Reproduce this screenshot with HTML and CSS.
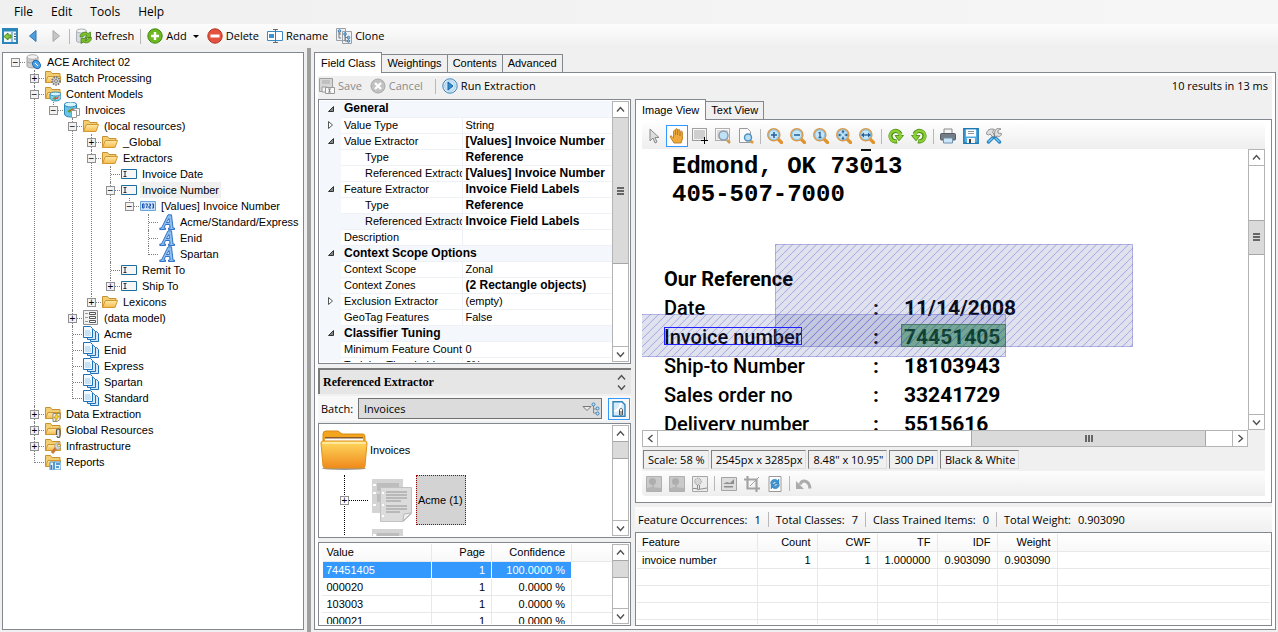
FILE: index.html
```html
<!DOCTYPE html>
<html lang="en">
<head>
<meta charset="utf-8">
<title>ACE Architect 02</title>
<link rel="stylesheet" href="styles.css">
</head>
<body>
<svg class="defs" aria-hidden="true">
  <defs>
    <linearGradient id="gold" x1="0" y1="0" x2="0" y2="1"><stop offset="0" stop-color="#ffd95e"/><stop offset="1" stop-color="#f08a1c"/></linearGradient>
    <linearGradient id="tan" x1="0" y1="0" x2="0" y2="1"><stop offset="0" stop-color="#ffe9a8"/><stop offset="1" stop-color="#f6bb4c"/></linearGradient>
  </defs>
  <symbol id="i-panel" viewBox="0 0 16 16"><rect x="1" y="1" width="14" height="14" fill="#eef6fc" stroke="#2a86b8" stroke-width="2"/><path d="M1 2.500h14" stroke="#2a86b8" stroke-width="2"/><path d="M10 4v11" stroke="#2a86b8"/><path d="M2 8.500 6 5v2h3v3H6v2z" fill="#8cc63a" stroke="#4c8a14"/><path d="M12 6h2M12 8.500h2M12 11h2" stroke="#445"/></symbol>
  <symbol id="i-back" viewBox="0 0 16 16"><path d="M11 2.500v11L4.500 8z" fill="#4d9fdc" stroke="#2c76b4"/></symbol>
  <symbol id="i-fwd" viewBox="0 0 16 16"><path d="M5 2.500v11L11.500 8z" fill="#c6c6c6" stroke="#a8a8a8"/></symbol>
  <symbol id="i-refresh" viewBox="0 0 16 16"><path d="M.5 3v10c0 2 10 2 10 0V3z" fill="#d7dbe0" stroke="#aab0b8"/><ellipse cx="5.500" cy="3" rx="5" ry="2" fill="#f3f5f7" stroke="#aab0b8"/><path d="M4 9c0-5 6-6 8-3.500l2.500-1.500v5.500H9l2-2c-2-1-4 0-4 1.500zM15.500 9.500c0 5-5 6.500-8 4.500l-2.500 1.500v-5h6l-2 2c2 0 3-1 3.500-3z" fill="#7cbf2a" stroke="#3f7d12" stroke-width=".7"/></symbol>
  <symbol id="i-add" viewBox="0 0 16 16"><circle cx="8" cy="8" r="7.200" fill="#6cb81e" stroke="#3f8a10"/><path d="M8 4v8M4 8h8" stroke="#fff" stroke-width="2.400"/></symbol>
  <symbol id="i-del" viewBox="0 0 16 16"><circle cx="8" cy="8" r="7.200" fill="#e4533f" stroke="#b8301f"/><path d="M3.500 8h9" stroke="#fff" stroke-width="3"/></symbol>
  <symbol id="i-rename" viewBox="0 0 16 16"><path d="M.5 3.500h15v9H.5z" fill="#fff" stroke="#3d8bc4"/><path d="M2 6h5v4H2z" fill="#3f92d2"/><path d="M6 1.500h5M8.500 1v14M6 14.500h5" stroke="#6b6b6b"/></symbol>
  <symbol id="i-clone" viewBox="0 0 16 16"><path d="M.5 .5h9v12h-9zM6.500 3.500h9v12h-9z" fill="#eef0f3" stroke="#9aa0a8"/><path d="M3 3v7h2M9 6v7h3M9 9.500h3M3 6h2" stroke="#777" fill="none"/><g fill="#8ec1ea" stroke="#2d6fa8" stroke-width=".8"><circle cx="3.500" cy="3" r="1.300"/><circle cx="9" cy="6" r="1.300"/><circle cx="12.500" cy="9.500" r="1.300"/><circle cx="12.500" cy="13" r="1.300"/></g></symbol>
  <symbol id="i-root" viewBox="0 0 16 16"><path d="M1 3v9c0 2.500 11 2.500 11 0V3z" fill="#cfcfcf" stroke="#a0a0a0"/><ellipse cx="6.500" cy="3" rx="5.500" ry="2.300" fill="#f2f2f2" stroke="#a8a8a8"/><path d="M1 7.500c2 2 9 2 11 0" stroke="#a0a0a0" fill="none"/><ellipse cx="10.500" cy="10.500" rx="3.500" ry="4.500" transform="rotate(-40 10.500 10.500)" fill="#4da2e6" stroke="#1c64a8"/><path d="m9 9 3 3M14 7l1-1M14 14l2 2" stroke="#fff"/></symbol>
  <symbol id="i-folder" viewBox="0 0 16 16"><path d="M.5 13.500v-11h5l1.500 2h7v2.500" fill="#f2cd72" stroke="#c69231"/><path d="M.5 13.500 3.500 6.500h12l-2.500 7z" fill="url(#tan)" stroke="#cf9833"/></symbol>
  <symbol id="i-fback" viewBox="0 0 16 16"><path d="M.5 12.500V1.500h5l1.500 2h8v9z" fill="#f2cd72" stroke="#c69231"/><path d="M.5 12.500 3 6.500h12.500v6z" fill="url(#tan)" stroke="#cf9833"/></symbol>
  <symbol id="i-fgear" viewBox="0 0 16 16"><use href="#i-fback"/><circle cx="11" cy="11" r="3.800" fill="#d5d5d5" stroke="#7a7a7a" stroke-dasharray="1.500 1" stroke-width="2"/><circle cx="11" cy="11" r="1.400" fill="#fff" stroke="#777"/></symbol>
  <symbol id="i-fdb" viewBox="0 0 16 16"><use href="#i-fback"/><path d="M5 8v4c1 4 10 4 11 0V8z" fill="#8ad2ee" stroke="#2f8fbc"/><ellipse cx="10.500" cy="8" rx="5.500" ry="2" fill="#d8f4fd" stroke="#2f8fbc"/><path d="m7 13 4-3v4z" fill="#5aa22e"/><path d="m9 13 5-3-1 3z" fill="#e6523b"/></symbol>
  <symbol id="i-fbolt" viewBox="0 0 16 16"><use href="#i-fback"/><path d="M8 7.500h7v6l-3 2H8z" fill="#eee" stroke="#8a8a8a"/><path d="m12 7-3 5h2l-1 4 4-6h-2z" fill="#ffd72e" stroke="#b58900" stroke-width=".6"/></symbol>
  <symbol id="i-fclip" viewBox="0 0 16 16"><use href="#i-fback"/><path d="M11.500 13V8.500c0-2 3.500-2 3.500 0V14c0 2-3 2-3 0" fill="#ddd" stroke="#555" stroke-width="1.200"/></symbol>
  <symbol id="i-ftool" viewBox="0 0 16 16"><use href="#i-fback"/><path d="m7 15 4-5" stroke="#c77a3a" stroke-width="3"/><path d="M10 9c-1-3 2-5 4-4l-2 2 1 2 3-1c0 3-3 4-5 3z" fill="#d4d9de" stroke="#888" stroke-width=".6"/></symbol>
  <symbol id="i-frep" viewBox="0 0 16 16"><use href="#i-fback"/><path d="M5 8h11v8H5z" fill="#e6f2fc" stroke="#4a90c8"/><path d="M6.500 11v4.500M9 8v7.500" stroke="#2b7dc4" stroke-width="1.500"/><path d="M11 10h4M11 13h3" stroke="#2b7dc4" stroke-width="1.300"/></symbol>
  <symbol id="i-db" viewBox="0 0 16 16"><path d="M.5 2v10c0 4 12 4 12 0V2z" fill="#6cc3e8" stroke="#2a87b5"/><ellipse cx="6.500" cy="2.500" rx="6" ry="2.500" fill="#d8f4fd" stroke="#2a87b5"/><path d="m3 9 6-3-3 5z" fill="#5aa22e"/><path d="m5 9 5-3-1 3z" fill="#e6523b"/><path d="M7.500 8.500h5v7h-5zM10.500 6.500h5v7h-3" fill="#fff" stroke="#999"/></symbol>
  <symbol id="i-field" viewBox="0 0 16 16"><path d="M.5 3.500h15v9H.5z" fill="#f6f6f6" stroke="#1e6f9e"/><path d="M2.500 5.500h3M4 5.500v5M2.500 10.500h3" stroke="#333"/></symbol>
  <symbol id="i-value" viewBox="0 0 16 16"><path d="M.5 3.500h15v9H.5z" fill="#c9e2f7" stroke="#6aa5dc"/><path d="M2.500 6h1.500v4h-1.500zM5.500 6h2L6.500 10M9 6h1.500v2H9v2h2M12 6h1.500v4h-1.500M12.500 8h1" fill="none" stroke="#1b4fb0"/></symbol>
  <symbol id="i-a" viewBox="0 0 16 16"><path d="M9 .8h3.500L14 14h1.500v1.500H9.500V14H11l-.4-3.500H6.500L5 14h1.500v1.500H.8V14H2.500zM7.400 8.500h3l-.4-4z" fill="#8cc0f4" fill-rule="evenodd" stroke="#2567bd" stroke-width=".9"/></symbol>
  <symbol id="i-model" viewBox="0 0 16 16"><path d="M.5 .5h14v14H.5z" fill="#f3f3f3" stroke="#8e8e8e"/><path d="M2 3.500h3M2 7.500h3M2 11.500h3" stroke="#999"/><path d="M6.500 2.500h6v2h-6zM6.500 6.500h6v2h-6zM6.500 10.500h6v2h-6z" fill="#fff" stroke="#555"/></symbol>
  <symbol id="i-docs" viewBox="0 0 16 16"><g fill="#d6eafb" stroke="#1e70b8"><path d="M7.500 5.500h6l2 2v8h-8z"/><path d="M4.500 3.500h6l2 2v8h-8z"/><path d="M.5 .5h7l2 2v9h-9z" fill="#f2f9ff"/></g><path d="M2 5h5M2 7h6M2 9h6" stroke="#9cc8ee"/></symbol>
  <symbol id="i-save" viewBox="0 0 16 16"><path d="M.5 .5h13v13H.5z" fill="#d6d6d6" stroke="#9f9f9f"/><path d="M3 3h8M3 5h8" stroke="#aaa"/><path d="M3 9h5v5H3z" fill="#f3f3f3" stroke="#999"/><path d="M6.500 9.500h9v6h-9z" fill="#f7f7f7" stroke="#999"/><path d="M9 11h3M10.500 11v3M9 14h3" stroke="#888"/></symbol>
  <symbol id="i-cancel" viewBox="0 0 16 16"><circle cx="8" cy="8" r="7" fill="#c2c2c2" stroke="#a8a8a8"/><path d="m5 5 6 6M11 5l-6 6" stroke="#fff" stroke-width="2.400"/></symbol>
  <symbol id="i-run" viewBox="0 0 16 16"><circle cx="8" cy="8" r="7.200" fill="#e3f1fb" stroke="#3b83b8"/><circle cx="8" cy="8" r="5.300" fill="#c9e5f8" stroke="#a7cfea"/><path d="M6 4v8l5-4z" fill="#2f8fd0" stroke="#1b629a"/></symbol>
  <symbol id="i-pointer" viewBox="0 0 16 16"><path d="M4 1v12l3-3 2 5 2-1-2-4.500h4z" fill="#ddd" stroke="#8a8a8a"/></symbol>
  <symbol id="i-hand" viewBox="0 0 16 16"><path d="M5 15 1.500 9.500c-1-2 1-2 1.500-1L4.500 10V3.500c0-1.500 2-1.500 2 0V7 1.800c0-1.500 2-1.500 2 0V7l.5-4.500c0-1.300 1.900-1.300 1.900 0V8l.6-4c.2-1.200 1.900-1 1.900.3V11L12 15z" fill="#eda93c" stroke="#bd7a1c" stroke-width=".9"/></symbol>
  <symbol id="i-sel" viewBox="0 0 16 16"><path d="M2 2h11v9H2z" fill="#cfcfcf"/><path d="M.5 .5h14v12H.5z" fill="none" stroke="#444" stroke-dasharray="1 1"/><path d="M12.500 9v7M9 12.500h7" stroke="#000"/></symbol>
  <symbol id="i-zsel" viewBox="0 0 16 16"><path d="M2 2h11v9H2z" fill="#dcdcdc"/><path d="M.5 .5h14v12H.5z" fill="none" stroke="#666" stroke-dasharray="1 1"/><path d="m12 12 3 3" stroke="#cf9a55" stroke-width="2.500"/><circle cx="8.500" cy="7.500" r="4.500" fill="#bfe2f7" stroke="#8d9cab" stroke-width="1.500"/></symbol>
  <symbol id="i-zpage" viewBox="0 0 16 16"><path d="M1.500 .5h8l3 3v11h-11z" fill="#fafafa" stroke="#999"/><path d="m12.500 12.500 2.500 2.500" stroke="#e29a35" stroke-width="2.500"/><circle cx="10" cy="9.500" r="3.500" fill="#b5def7" stroke="#4e8fc0" stroke-width="1.400"/></symbol>
  <symbol id="i-lens" viewBox="0 0 16 16"><path d="m11.500 11.500 3 3" stroke="#e0922c" stroke-width="3.200" stroke-linecap="round"/><circle cx="6.800" cy="6.800" r="6" fill="#c4e6fa" stroke="#d99a4a" stroke-width="1.600"/><circle cx="6.800" cy="6.800" r="4.900" fill="none" stroke="#7fb6d8" stroke-width=".8"/></symbol>
  <symbol id="i-zin" viewBox="0 0 16 16"><use href="#i-lens"/><path d="M7 4v6M4 7h6" stroke="#245f96" stroke-width="1.500"/></symbol>
  <symbol id="i-zout" viewBox="0 0 16 16"><use href="#i-lens"/><path d="M4 7h6" stroke="#245f96" stroke-width="1.500"/></symbol>
  <symbol id="i-zone" viewBox="0 0 16 16"><use href="#i-lens"/><path d="M5.500 5 7 4.500V9.500M5.500 9.500h3" stroke="#245f96" stroke-width="1.300" fill="none"/></symbol>
  <symbol id="i-zfit" viewBox="0 0 16 16"><use href="#i-lens"/><path d="m7 2 1.800 2.300H5.200zM7 12l1.800-2.300H5.200zM2 7l2.300-1.800v3.600zM12 7 9.700 5.200v3.600z" fill="#245f96"/><path d="M7 4v1.500M7 8.500V10M4 7h1.500M8.500 7H10" stroke="#245f96"/></symbol>
  <symbol id="i-zwide" viewBox="0 0 16 16"><use href="#i-lens"/><path d="M2 7 5 4.500v5zM12 7 9 4.500v5z" fill="#245f96"/><path d="M4 7h6" stroke="#245f96" stroke-width="1.300"/></symbol>
  <symbol id="i-rotl" viewBox="0 0 16 16"><path d="M9 13.200A5.200 5.200 0 1 1 12.500 6" fill="none" stroke="#4a8c12" stroke-width="4.200"/><path d="M7 7.500h8.500L11 12.800z" fill="#8ccf35" stroke="#4a8c12" stroke-width=".9"/><path d="M8.500 13.100A5.200 5.200 0 1 1 12.200 6.500l.5 1.500" fill="none" stroke="#8ccf35" stroke-width="2.600"/></symbol>
  <symbol id="i-print" viewBox="0 0 16 16"><path d="M4 1h8v6H4z" fill="#f4f4f4" stroke="#888"/><rect x=".5" y="5.500" width="15" height="6.500" rx="1" fill="#747c86" stroke="#545b64"/><path d="M3.500 10h9v5h-9z" fill="#cfe6f8" stroke="#6b8fae"/></symbol>
  <symbol id="i-disk" viewBox="0 0 16 16"><path d="M.8 .8h14.400v14.400H.8z" fill="#53acdf" stroke="#1d78b4" stroke-width="1.400"/><path d="M3 1.500h10v7H3z" fill="#fff"/><path d="M5 3.500h6M5 5.500h6" stroke="#8a98a4"/><path d="M4 10h8v5H4z" fill="#f3f3f3"/><path d="M6 11h2v4H6z" fill="#444"/></symbol>
  <symbol id="i-tools" viewBox="0 0 16 16"><path d="m2.500 14 6-6M13.500 14 8 8.500" stroke="#2786c4" stroke-width="3.400" stroke-linecap="round"/><path d="m2.500 14 4-4M13.500 14l-4-4" stroke="#7cc3ee" stroke-width="1.400"/><path d="M.5 6c0-4 4-6 8-4.500L6.500 4l2.500 3.500L7 9 4 6 2.500 7zM8 7l1-4c1-3 4-3 6-2l-3 1.500V5l3.500 .5c0 3-3 3.500-4.500 2.500L9.500 9z" fill="#dedede" stroke="#7a7a7a" stroke-width=".8"/></symbol>
  <symbol id="i-land" viewBox="0 0 16 16"><path d="M.5 .5h15v15H.5z" fill="#c9c9c9" stroke="#b0b0b0"/><circle cx="6.500" cy="5.500" r="3.500" fill="#aeaeae"/><path d="M6 8h2v4H6zM1 12l4-1 10 1v3H1z" fill="#b4b4b4"/></symbol>
  <symbol id="i-land2" viewBox="0 0 16 16"><path d="M.5 .5h15v15H.5z" fill="#ececec" stroke="#a6a6a6"/><circle cx="6" cy="5.500" r="3.300" fill="#d6d6d6" stroke="#8c8c8c" stroke-dasharray="1 1"/><path d="M5.500 9v4M7.500 9v4M1 12.500h3l2 1 9-1.500" stroke="#8f8f8f" fill="none"/></symbol>
  <symbol id="i-pic" viewBox="0 0 16 16"><path d="M.5 1.500h15v13H.5z" fill="#ddd" stroke="#a4a4a4"/><path d="M2 8l4-2 3 1 4-4v5H2zM3 10h9v1.500H3z" fill="#8e8e8e"/></symbol>
  <symbol id="i-crop" viewBox="0 0 16 16"><path d="M3.500 0v12.500H16M0 3.500h12.500V16" fill="none" stroke="#a3a3a3" stroke-width="2.200"/><path d="m6 10 9-9" stroke="#a3a3a3"/></symbol>
  <symbol id="i-sync" viewBox="0 0 16 16"><path d="M2 .5h12v15H2z" fill="#fff" stroke="#999"/><path d="M3.500 7.500c0-4 5-5.500 7-3L12 3v5H7.500l1.500-1.500c-1-1-3 0-3 1zM12.500 8.500c0 4-5 5.500-7 3L4 13V8h4.500L7 9.500c1 1 3 0 3-1z" fill="#3e94d4" stroke="#1f6ba5" stroke-width=".4"/></symbol>
  <symbol id="i-undo" viewBox="0 0 16 16"><path d="M4 8.500c2-5 9-5 10 4" fill="none" stroke="#ababab" stroke-width="3"/><path d="M0 5v8h8z" fill="#ababab"/></symbol>
  <symbol id="i-pageclip" viewBox="0 0 16 16"><path d="M2 .8h9l3 3v11.400H2z" fill="#d6ecfa" stroke="#2e83bd" stroke-width="1.400"/><path d="M3 10c4 0 6-3 7-8" stroke="#fff" stroke-width="2" fill="none"/><path d="M8.500 14V9c0-2 3-2 3 0v5" fill="#fff" stroke="#555"/><path d="M10 10v5" stroke="#555"/></symbol>
  <symbol id="i-picker" viewBox="0 0 18 14"><path d="M1 4.500h8l-4 4z" fill="#eee" stroke="#777"/><path d="M11.500 3v8h3M11.500 7h3" stroke="#888" fill="none"/><g fill="#cfe6f8" stroke="#3b7db4"><circle cx="11.500" cy="2.500" r="1.500"/><circle cx="15.500" cy="6.500" r="1.500"/><circle cx="15.500" cy="11.500" r="1.500"/></g></symbol>
  <symbol id="i-up" viewBox="0 0 9 9"><path d="m1 6.500 3.500-4 3.500 4" fill="none" stroke="#505050" stroke-width="1.400"/></symbol>
  <symbol id="i-down" viewBox="0 0 9 9"><path d="m1 2.500 3.500 4 3.500-4" fill="none" stroke="#505050" stroke-width="1.400"/></symbol>
  <symbol id="i-left" viewBox="0 0 9 9"><path d="m6.500 1-4 3.500 4 3.500" fill="none" stroke="#505050" stroke-width="1.400"/></symbol>
  <symbol id="i-right" viewBox="0 0 9 9"><path d="m2.500 1 4 3.500-4 3.500" fill="none" stroke="#505050" stroke-width="1.400"/></symbol>
  <symbol id="i-open" viewBox="0 0 8 8"><path d="M5.500 1.500v5h-5z" fill="#888" stroke="#333"/></symbol>
  <symbol id="i-shut" viewBox="0 0 8 8"><path d="M.5 .5v7l4-3.500z" fill="#fff" stroke="#555"/></symbol>
  <symbol id="i-bigfolder" viewBox="0 0 48 42"><ellipse cx="24" cy="39.500" rx="22" ry="1.500" fill="#999"/><path d="M3 12V5q0-3 3-3h12l4 3h21q2 0 2 3v6z" fill="#f3a51d" stroke="#d98a14"/><path d="M5 8h38v8H5z" fill="#8a5a2a"/><path d="M5 9.500h38V16H5z" fill="#fff"/><path d="M1 14q0-2 2-2h42q2 0 2 2l-2 23q0 2-2 2H5q-2 0-2-2z" fill="url(#gold)" stroke="#e0901b"/><path d="M2.500 14h43" stroke="#fff1b0" stroke-width="1.500"/></symbol>
  <symbol id="i-bigdoc" viewBox="0 0 42 44"><path d="M1 1h31v34H1z" fill="#d4d4d4"/><path d="M6 5h22v8H6zM6 16h22v8H6z" fill="#bdbdbd"/><path d="M9.500 9.500h31v26l-8 8h-23z" fill="#dcdcdc" stroke="#c2c2c2"/><path d="M15 14h21M15 17h21M15 20h21M15 23h15M15 28h21M15 31h21M15 34h14" stroke="#b8b8b8" stroke-width="2"/><path d="m32 43 1-7 7-1z" fill="#f2f2f2" stroke="#b8b8b8"/><path d="M2 7h3M2 15h3M2 27h3M11 15h2M11 27h2M11 38h2" stroke="#fff" stroke-width="2"/></symbol>
</svg>

<div class="app">
  <nav class="menubar" aria-label="Main menu">
    <button>File</button><button>Edit</button><button>Tools</button><button>Help</button>
  </nav>
  <div class="toolbar main-tools">
    <button class="bare" aria-label="Toggle panel"><svg><use href="#i-panel"/></svg></button>
    <button class="bare" aria-label="Back"><svg><use href="#i-back"/></svg></button>
    <button class="bare" aria-label="Forward"><svg><use href="#i-fwd"/></svg></button>
    <i class="sep"></i>
    <button><svg><use href="#i-refresh"/></svg>Refresh</button>
    <i class="sep"></i>
    <button><svg><use href="#i-add"/></svg>Add<b class="caret"></b></button>
    <button><svg><use href="#i-del"/></svg>Delete</button>
    <button><svg><use href="#i-rename"/></svg>Rename</button>
    <button><svg><use href="#i-clone"/></svg>Clone</button>
  </div>

  <div class="workspace">
    <aside class="tree box">
      <ul class="root">
        <li><div class="row"><span class="tick"><button class="pm">−</button></span><svg><use href="#i-root"/></svg><span>ACE Architect 02</span></div>
          <ul>
            <li><div class="row"><span class="tick"><button class="pm">+</button></span><svg><use href="#i-fgear"/></svg><span>Batch Processing</span></div></li>
            <li><div class="row"><span class="tick"><button class="pm">−</button></span><svg><use href="#i-fdb"/></svg><span>Content Models</span></div>
              <ul>
                <li><div class="row"><span class="tick"><button class="pm">−</button></span><svg><use href="#i-db"/></svg><span>Invoices</span></div>
                  <ul>
                    <li><div class="row"><span class="tick"><button class="pm">−</button></span><svg><use href="#i-folder"/></svg><span>(local resources)</span></div>
                      <ul>
                        <li><div class="row"><span class="tick"><button class="pm">+</button></span><svg><use href="#i-folder"/></svg><span>_Global</span></div></li>
                        <li><div class="row"><span class="tick"><button class="pm">−</button></span><svg><use href="#i-folder"/></svg><span>Extractors</span></div>
                          <ul>
                            <li><div class="row"><span class="tick"></span><svg><use href="#i-field"/></svg><span>Invoice Date</span></div></li>
                            <li><div class="row"><span class="tick"><button class="pm">−</button></span><svg><use href="#i-field"/></svg><span class="picked">Invoice Number</span></div>
                              <ul>
                                <li><div class="row"><span class="tick"><button class="pm">−</button></span><svg><use href="#i-value"/></svg><span>[Values] Invoice Number</span></div>
                                  <ul>
                                    <li><div class="row"><span class="tick"></span><svg><use href="#i-a"/></svg><span>Acme/Standard/Express</span></div></li>
                                    <li><div class="row"><span class="tick"></span><svg><use href="#i-a"/></svg><span>Enid</span></div></li>
                                    <li><div class="row"><span class="tick"></span><svg><use href="#i-a"/></svg><span>Spartan</span></div></li>
                                  </ul>
                                </li>
                              </ul>
                            </li>
                            <li><div class="row"><span class="tick"></span><svg><use href="#i-field"/></svg><span>Remit To</span></div></li>
                            <li><div class="row"><span class="tick"><button class="pm">+</button></span><svg><use href="#i-field"/></svg><span>Ship To</span></div></li>
                          </ul>
                        </li>
                        <li><div class="row"><span class="tick"><button class="pm">+</button></span><svg><use href="#i-folder"/></svg><span>Lexicons</span></div></li>
                      </ul>
                    </li>
                    <li><div class="row"><span class="tick"><button class="pm">+</button></span><svg><use href="#i-model"/></svg><span>(data model)</span></div></li>
                    <li><div class="row"><span class="tick"></span><svg><use href="#i-docs"/></svg><span>Acme</span></div></li>
                    <li><div class="row"><span class="tick"></span><svg><use href="#i-docs"/></svg><span>Enid</span></div></li>
                    <li><div class="row"><span class="tick"></span><svg><use href="#i-docs"/></svg><span>Express</span></div></li>
                    <li><div class="row"><span class="tick"></span><svg><use href="#i-docs"/></svg><span>Spartan</span></div></li>
                    <li><div class="row"><span class="tick"></span><svg><use href="#i-docs"/></svg><span>Standard</span></div></li>
                  </ul>
                </li>
              </ul>
            </li>
            <li><div class="row"><span class="tick"><button class="pm">+</button></span><svg><use href="#i-fbolt"/></svg><span>Data Extraction</span></div></li>
            <li><div class="row"><span class="tick"><button class="pm">+</button></span><svg><use href="#i-fclip"/></svg><span>Global Resources</span></div></li>
            <li><div class="row"><span class="tick"><button class="pm">+</button></span><svg><use href="#i-ftool"/></svg><span>Infrastructure</span></div></li>
            <li><div class="row"><span class="tick"></span><svg><use href="#i-frep"/></svg><span>Reports</span></div></li>
          </ul>
        </li>
      </ul>
    </aside>
    <div class="splitter"></div>

    <main class="editor">
      <div class="tabs">
        <button class="tab on">Field Class</button><button class="tab">Weightings</button><button class="tab">Contents</button><button class="tab">Advanced</button>
      </div>
      <div class="page">
        <div class="toolbar run-tools">
          <button disabled><svg><use href="#i-save"/></svg>Save</button>
          <button disabled><svg><use href="#i-cancel"/></svg>Cancel</button>
          <i class="sep"></i>
          <button><svg><use href="#i-run"/></svg>Run Extraction</button>
          <span class="result">10 results in 13 ms</span>
        </div>
        <div class="columns">
          <section class="fields">
            <div class="box props">
              <div class="clip">
                <table>
                  <colgroup><col class="c-gut"><col class="c-name"><col></colgroup>
                  <tr class="cat"><td><svg><use href="#i-open"/></svg></td><th colspan="2">General</th></tr>
                  <tr><td><svg><use href="#i-shut"/></svg></td><th>Value Type</th><td>String</td></tr>
                  <tr><td><svg><use href="#i-open"/></svg></td><th>Value Extractor</th><td class="set">[Values] Invoice Number</td></tr>
                  <tr><td></td><th class="sub">Type</th><td class="set">Reference</td></tr>
                  <tr><td></td><th class="sub">Referenced Extractor</th><td class="set">[Values] Invoice Number</td></tr>
                  <tr><td><svg><use href="#i-open"/></svg></td><th>Feature Extractor</th><td class="set">Invoice Field Labels</td></tr>
                  <tr><td></td><th class="sub">Type</th><td class="set">Reference</td></tr>
                  <tr><td></td><th class="sub hot">Referenced Extractor</th><td class="set">Invoice Field Labels</td></tr>
                  <tr><td></td><th>Description</th><td></td></tr>
                  <tr class="cat"><td><svg><use href="#i-open"/></svg></td><th colspan="2">Context Scope Options</th></tr>
                  <tr><td></td><th>Context Scope</th><td>Zonal</td></tr>
                  <tr><td></td><th>Context Zones</th><td class="set">(2 Rectangle objects)</td></tr>
                  <tr><td><svg><use href="#i-shut"/></svg></td><th>Exclusion Extractor</th><td>(empty)</td></tr>
                  <tr><td></td><th>GeoTag Features</th><td>False</td></tr>
                  <tr class="cat"><td><svg><use href="#i-open"/></svg></td><th colspan="2">Classifier Tuning</th></tr>
                  <tr><td></td><th>Minimum Feature Count</th><td>0</td></tr>
                  <tr><td></td><th>Training Threshold</th><td>0%</td></tr>
                </table>
              </div>
              <div class="vbar"><button aria-label="Up"><svg><use href="#i-up"/></svg></button><div class="thumb t-props"><i class="grip"></i></div><div class="track"></div><button aria-label="Down"><svg><use href="#i-down"/></svg></button></div>
            </div>
            <div class="heading"><h2>Referenced Extractor</h2><span class="spin"><svg><use href="#i-up"/></svg><svg><use href="#i-down"/></svg></span></div>
            <div class="batch"><label for="batch">Batch:</label><div class="picker"><input id="batch" value="Invoices" readonly><svg><use href="#i-picker"/></svg></div><button class="clipbtn" aria-label="Show page"><svg><use href="#i-pageclip"/></svg></button></div>
            <div class="box items">
              <div class="clip">
                <div class="item"><svg class="big"><use href="#i-bigfolder"/></svg><span>Invoices</span></div>
                <div class="kids">
                  <div class="item"><span class="node"><button class="pm">+</button></span><svg class="doc"><use href="#i-bigdoc"/></svg><span class="chosen">Acme (1)</span></div>
                  <div class="item"><span class="node"></span><svg class="doc"><use href="#i-bigdoc"/></svg></div>
                </div>
              </div>
              <div class="vbar"><button aria-label="Up"><svg><use href="#i-up"/></svg></button><div class="thumb t-short"></div><div class="track"></div><button aria-label="Down"><svg><use href="#i-down"/></svg></button></div>
            </div>
            <div class="box values">
              <div class="clip">
                <table class="data">
                  <colgroup><col class="w110"><col class="w60"><col class="w80"><col></colgroup>
                  <thead><tr><th class="l">Value</th><th>Page</th><th>Confidence</th><th></th></tr></thead>
                  <tbody>
                    <tr class="sel"><td class="l">74451405</td><td>1</td><td>100.0000 %</td><td></td></tr>
                    <tr><td class="l">000020</td><td>1</td><td>0.0000 %</td><td></td></tr>
                    <tr><td class="l">103003</td><td>1</td><td>0.0000 %</td><td></td></tr>
                    <tr><td class="l">000021</td><td>1</td><td>0.0000 %</td><td></td></tr>
                  </tbody>
                </table>
              </div>
              <div class="vbar"><button aria-label="Up"><svg><use href="#i-up"/></svg></button><div class="thumb t-short"></div><div class="track"></div><button aria-label="Down"><svg><use href="#i-down"/></svg></button></div>
            </div>
          </section>

          <section class="viewer">
            <div class="tabs"><button class="tab on">Image View</button><button class="tab">Text View</button></div>
            <div class="imgpage">
              <div class="toolbar icons">
                <button aria-label="Pointer"><svg><use href="#i-pointer"/></svg></button>
                <button class="active" aria-label="Pan"><svg><use href="#i-hand"/></svg></button>
                <button aria-label="Select"><svg><use href="#i-sel"/></svg></button>
                <button aria-label="Zoom selection"><svg><use href="#i-zsel"/></svg></button>
                <button aria-label="Zoom page"><svg><use href="#i-zpage"/></svg></button>
                <i class="sep"></i>
                <button aria-label="Zoom in"><svg><use href="#i-zin"/></svg></button>
                <button aria-label="Zoom out"><svg><use href="#i-zout"/></svg></button>
                <button aria-label="Actual size"><svg><use href="#i-zone"/></svg></button>
                <button aria-label="Fit page"><svg><use href="#i-zfit"/></svg></button>
                <button aria-label="Fit width"><svg><use href="#i-zwide"/></svg></button>
                <i class="sep"></i>
                <button aria-label="Rotate left"><svg><use href="#i-rotl"/></svg></button>
                <button aria-label="Rotate right"><svg class="flip"><use href="#i-rotl"/></svg></button>
                <i class="sep"></i>
                <button aria-label="Print"><svg><use href="#i-print"/></svg></button>
                <button aria-label="Save image"><svg><use href="#i-disk"/></svg></button>
                <button aria-label="Settings"><svg><use href="#i-tools"/></svg></button>
              </div>
              <div class="canvas">
                <div class="scan">
                  <i class="mark"></i>
                  <address>Edmond, OK 73013<br>405-507-7000</address>
                  <dl>
                    <dt class="strong">Our Reference</dt><dd></dd><dd></dd>
                    <dt>Date</dt><dd>:</dd><dd>11/14/2008</dd>
                    <dt>Invoice number</dt><dd>:</dd><dd>74451405</dd>
                    <dt>Ship-to Number</dt><dd>:</dd><dd>18103943</dd>
                    <dt>Sales order no</dt><dd>:</dd><dd>33241729</dd>
                    <dt>Delivery number</dt><dd>:</dd><dd>5515616</dd>
                  </dl>
                  <i class="zone z-upper"></i><i class="zone z-lower"></i><i class="hit"></i><i class="found"></i>
                </div>
                <div class="vbar"><button aria-label="Up"><svg><use href="#i-up"/></svg></button><div class="track t-lead"></div><div class="thumb t-img"><i class="grip"></i></div><div class="track"></div><button aria-label="Down"><svg><use href="#i-down"/></svg></button></div>
                <div class="hbar"><button aria-label="Left"><svg><use href="#i-left"/></svg></button><div class="track h-lead"></div><div class="thumb h-img"><i class="grip side"></i></div><div class="track h-tail"></div><button aria-label="Right"><svg><use href="#i-right"/></svg></button></div>
              </div>
              <div class="status"><span>Scale: 58 %</span><span>2545px x 3285px</span><span>8.48" x 10.95"</span><span>300 DPI</span><span>Black &amp; White</span></div>
              <div class="toolbar icons low">
                <button disabled aria-label="Thumbnail"><svg><use href="#i-land"/></svg></button>
                <button disabled aria-label="Thumbnail alternate"><svg><use href="#i-land"/></svg></button>
                <button disabled aria-label="Threshold"><svg><use href="#i-land2"/></svg></button>
                <i class="sep"></i>
                <button disabled aria-label="Adjust"><svg><use href="#i-pic"/></svg></button>
                <button disabled aria-label="Crop"><svg><use href="#i-crop"/></svg></button>
                <button aria-label="Reload"><svg><use href="#i-sync"/></svg></button>
                <i class="sep"></i>
                <button disabled aria-label="Undo"><svg><use href="#i-undo"/></svg></button>
              </div>
            </div>
            <div class="stats"><span>Feature Occurrences:</span><b>1</b><i class="sep"></i><span>Total Classes:</span><b>7</b><i class="sep"></i><span>Class Trained Items:</span><b>0</b><i class="sep"></i><span>Total Weight:</span><b>0.903090</b></div>
            <div class="box features">
              <div class="clip">
                <table class="data">
                  <colgroup><col class="w120"><col class="w60"><col class="w60"><col class="w60"><col class="w60"><col class="w60"><col></colgroup>
                  <thead><tr><th class="l">Feature</th><th>Count</th><th>CWF</th><th>TF</th><th>IDF</th><th>Weight</th><th></th></tr></thead>
                  <tbody>
                    <tr><td class="l">invoice number</td><td>1</td><td>1</td><td>1.000000</td><td>0.903090</td><td>0.903090</td><td></td></tr>
                    <tr><td></td><td></td><td></td><td></td><td></td><td></td><td></td></tr>
                    <tr><td></td><td></td><td></td><td></td><td></td><td></td><td></td></tr>
                    <tr><td></td><td></td><td></td><td></td><td></td><td></td><td></td></tr>
                    <tr><td></td><td></td><td></td><td></td><td></td><td></td><td></td></tr>
                  </tbody>
                </table>
              </div>
            </div>
          </section>
        </div>
      </div>
    </main>
  </div>
</div>
</body>
</html>
```

FILE: styles.css
```css
* { box-sizing: border-box; }
body { margin: 0; background: #f0f0f0; color: #000; font: 11px/16px "Liberation Sans", Arial, sans-serif; }
button, input { font: inherit; color: inherit; background: none; border: 0; padding: 0; margin: 0; }
ul, dl, dd, h2 { margin: 0; padding: 0; list-style: none; }
svg { width: 16px; height: 16px; flex: none; display: block; overflow: visible; }
.defs { position: absolute; width: 0; height: 0; }
.app { height: 100vh; display: flex; flex-direction: column; overflow: hidden; }

.menubar { display: flex; height: 24px; padding-left: 5px; background: linear-gradient(90deg, #f0f0f0, #f6f6f6); font: 12px/24px "Open Sans", sans-serif; }
.menubar button { padding: 0 9px; }
.toolbar { display: flex; align-items: center; flex: none; background: linear-gradient(#fdfdfd, #efefef); font: 11px/16px "Open Sans", sans-serif; }
.toolbar button { display: flex; align-items: center; gap: 3px; }
.sep { flex: none; width: 1px; height: 15px; background: #b8b8b8; }
.main-tools { height: 24px; padding-left: 2px; gap: 8px; }
.main-tools .bare { margin-right: -1px; }
.main-tools .sep { margin: 0 -2px; }
.caret { margin-left: 3px; border: 3px solid transparent; border-top-color: #000; border-bottom: 0; }

.workspace { flex: 1; min-height: 0; display: flex; padding: 4px 2px 2px; }
.box { background: #fff; border: 1px solid #828790; }
.tree { flex: none; width: 302px; padding: 1px 3px; overflow: hidden; }
.splitter { flex: none; width: 4px; margin: -4px 3px -2px; background: #a0a0a0; }

.tree li { position: relative; padding-left: 19px; }
.tree li::before { content: ""; position: absolute; left: 9px; top: 0; bottom: 0; border-left: 1px dotted #808080; }
.tree li:last-child::before { bottom: auto; height: 9px; }
.root > li:last-child::before { display: none; }
.row { display: flex; align-items: center; height: 16px; margin-left: -19px; white-space: nowrap; }
.row svg { margin-left: 1px; }
.row > span:last-child { margin-left: 3px; padding: 0 2px; }
.tick { flex: none; width: 19px; height: 16px; display: grid; place-items: center; position: relative; }
.tick::after { content: ""; position: absolute; left: 10px; right: 0; top: 8px; border-top: 1px dotted #808080; }
.pm { position: relative; z-index: 1; width: 9px; height: 9px; border: 1px solid #919191; background: #f2f2f2; font-size: 10px; line-height: 7px; display: grid; place-items: center; }
.picked { background: #f0f0f0; }

.editor { flex: 1; min-width: 0; display: flex; flex-direction: column; }
.tabs { display: flex; align-items: flex-end; flex: none; height: 21px; position: relative; z-index: 1; margin-bottom: -1px; }
.tab { height: 18px; margin-bottom: 1px; padding: 0 5px; border: 1px solid #828790; border-bottom: 0; margin-left: -1px; background: #f0f0f0; line-height: 17px; }
.tab.on { height: 21px; margin: 0; padding: 0 6px; background: #fff; }
.page { flex: 1; min-height: 0; display: flex; flex-direction: column; border: 1px solid #828790; padding: 3px; background: #fff; }
.run-tools { height: 23px; background: #f0f0f0; gap: 8px; padding: 0 4px 3px 1px; }
.run-tools button:disabled { color: #8a8a8a; }
.run-tools .sep { margin: 0 -2px 0 4px; }
.result { margin-left: auto; }
.columns { flex: 1; min-height: 0; display: flex; gap: 4px; background: #f0f0f0; }

.fields { flex: none; width: 313px; display: flex; flex-direction: column; }
.props, .items, .values { display: flex; min-height: 0; }
.props { flex: 1 1 266px; padding: 1px; }
.items { flex: 1 1 115px; padding: 1px; }
.values { flex: 1 1 84px; padding: 1px; margin-top: 4px; }
.clip { flex: 1; min-width: 0; min-height: 0; overflow: hidden; }
table { width: 100%; border-collapse: collapse; table-layout: fixed; }
td, th { padding: 0; font-weight: 400; text-align: left; white-space: nowrap; overflow: hidden; }
.c-gut { width: 21px; }
.c-name { width: 121px; }
.props tr { height: 16px; }
.props td, .props th { line-height: 15px; height: 16px; padding: 0 0 0 3px; border-bottom: 1px solid #eef1f6; }
.props td:first-child { background: #f4f7fc; border-color: #f4f7fc; padding: 0 8px; }
.props td:first-child svg { width: 8px; height: 8px; }
.props .cat th { background: #f4f7fc; font-weight: 700; font-size: 12px; }
.props th + td { border-left: 1px solid #eef1f6; padding-left: 3px; }
.props .sub { padding-left: 24px; }
.props .hot { background: #f4f7fc; }
.props .set { font-weight: 700; font-size: 12px; }

.vbar { flex: none; width: 17px; display: flex; flex-direction: column; border: 1px solid #b4b4b4; background: #fff; }
.vbar button, .hbar button { flex: none; width: 15px; height: 15px; display: grid; place-items: center; }
.vbar button svg, .hbar button svg { width: 9px; height: 9px; }
.track { flex: 1; }
.thumb { flex: none; background: #dadada; border: 1px solid #a6a6a6; border-width: 1px 0; display: grid; place-items: center; }
.vbar > .track:nth-child(2) { border-top: 1px solid #b4b4b4; }
.vbar > .track + button { border-top: 1px solid #b4b4b4; }
.t-props { height: 147px; }
.t-short { height: 18px; }
.t-lead { flex: 54; }
.t-img { height: 35px; }
.t-img + .track { flex: 161; }
.grip { width: 7px; height: 8px; background: repeating-linear-gradient(#666 0 2px, transparent 2px 3px); }
.grip.side { width: 8px; height: 7px; background: repeating-linear-gradient(90deg, #666 0 2px, transparent 2px 3px); }

.heading { flex: none; display: flex; align-items: center; justify-content: space-between; height: 26px; margin: 4px 0 2px; padding: 0 5px 0 3px; background: #e6e6e6; border: 2px solid #7a7a7a; border-width: 2px 0 0 2px; }
.heading h2 { font: 700 12px/16px "Liberation Serif", "Times New Roman", serif; }
.spin { display: grid; gap: 1px; }
.spin svg { width: 9px; height: 9px; }
.batch { flex: none; display: flex; align-items: center; height: 25px; margin-bottom: 2px; padding: 0 1px 0 3px; background: #f8f8f8; font: 11px/16px "Open Sans", sans-serif; }
.picker { flex: 1; min-width: 0; display: flex; align-items: center; height: 21px; margin: 0 6px 0 5px; padding: 0 1px 0 5px; background: #dcdcdc; border: 1px solid #707070; }
.picker input { flex: 1; min-width: 0; }
.picker svg { width: 18px; height: 14px; }
.clipbtn { width: 22px; height: 22px; display: grid; place-items: center; border: 1px solid #3399ff; }

.item { display: flex; align-items: center; height: 50px; }
.item .big { width: 48px; height: 42px; margin: 0 2px 0 0; }
.kids { margin-left: 24px; border-left: 1px dotted #000; }
.kids .item { margin-left: -5px; }
.node { width: 31px; height: 50px; display: grid; align-content: center; position: relative; }
.node::after { content: ""; position: absolute; left: 9px; right: 3px; top: 25px; border-top: 1px dotted #000; }
.node .pm { background: #fff; }
.doc { width: 42px; height: 44px; margin-right: 3px; }
.chosen { width: 50px; height: 50px; line-height: 48px; border: 1px dotted #a00000; background: #d3d3d3; white-space: nowrap; padding-left: 1px; }

.data th, .data td { height: 17px; line-height: 16px; border-right: 1px solid #e8e8e8; border-bottom: 1px solid #e8e8e8; text-align: right; padding: 0 6px; }
.data th { background: linear-gradient(#fff, #f8f8f8); }
.data th:last-child, .data td:last-child { border-right: 0; }
.data .l { text-align: left; padding-left: 5px; }
.data .sel td { background: #3399ff; color: #fff; border-color: #fff; }
.data .sel .l { border-left: 3px solid #fff; padding-left: 3px; }
.data .sel td:last-child { background: #fff; }
.w60 { width: 60px; }
.w80 { width: 80px; }
.w110 { width: 110px; }
.w120 { width: 120px; }

.viewer { flex: 1; min-width: 0; display: flex; flex-direction: column; }
.imgpage { flex: 1; min-height: 0; display: flex; flex-direction: column; padding: 3px 6px 6px; background: #fff; border: 1px solid #828790; }
.icons { height: 26px; padding-left: 1px; gap: 1px; background: linear-gradient(#fdfdfd, #eeeeee); }
.icons button { width: 22px; height: 22px; justify-content: center; }
.icons .active { border: 1px solid #3399ff; background: #fff; }
.icons .sep { margin: 0 2px; }
.flip { transform: scaleX(-1); }
.canvas { flex: 1; min-height: 0; display: grid; grid-template: minmax(0, 1fr) 17px / minmax(0, 1fr) 17px; background: #f0f0f0; }
.hbar { display: flex; border: 1px solid #b4b4b4; background: #fff; }
.hbar .thumb { border-width: 0 1px; }
.hbar button:first-child { border-right: 1px solid #b4b4b4; }
.hbar button:last-child { border-left: 1px solid #b4b4b4; }
.h-lead { flex: 313; }
.h-img { flex: 233; }
.h-tail { flex: 26; }

.scan { position: relative; overflow: hidden; padding: 4px 22px 0; background: #fff; }
.scan address { padding-left: 8px; font: 700 24px/28px "Liberation Mono", monospace; }
.scan dl { display: grid; grid-template-columns: 209px 31px auto; grid-auto-rows: 29px; margin-top: 56px; font: 700 21px/29px Roboto, sans-serif; white-space: nowrap; }
.scan dt { font-size: 20px; font-weight: 500; }
.scan dt.strong { font-weight: 700; }
.mark { position: absolute; left: 219px; top: 0; width: 10px; height: 2px; background: #111; }
.zone, .hit, .found { position: absolute; border: 1px solid rgba(90, 90, 200, .35); }
.zone { background: linear-gradient(135deg, transparent 43%, rgba(80, 80, 210, .32) 47% 53%, transparent 57%) 0 0 / 8px 8px, rgba(50, 60, 140, .15); }
.z-upper { left: 133px; top: 95px; width: 358px; height: 103px; }
.z-lower { left: -1px; top: 165px; width: 365px; height: 43px; }
.hit { left: 259px; top: 175px; width: 105px; height: 23px; background: rgba(20, 125, 60, .45); border-color: #4c7a70; }
.found { left: 22px; top: 178px; width: 138px; height: 18px; border: 1px solid #2222ff; }

.status { flex: none; display: flex; gap: 2px; height: 24px; padding: 3px 1px 2px; background: #f0f0f0; font: 11px/17px "Open Sans", sans-serif; white-space: nowrap; }
.status span { padding: 0 3px 0 4px; border: 1px solid #dcdcdc; border-top-color: #808080; border-left-color: #808080; }
.low { height: 25px; border-bottom-left-radius: 4px; }

.stats { flex: none; display: flex; align-items: center; gap: 7px; height: 25px; margin-top: 4px; padding-left: 3px; background: linear-gradient(#fcfcfc, #f0f0f0); font: 11px/16px "Open Sans", sans-serif; white-space: nowrap; }
.stats b { font-weight: 400; }
.features { flex: none; height: 94px; padding: 1px; display: flex; }
```
